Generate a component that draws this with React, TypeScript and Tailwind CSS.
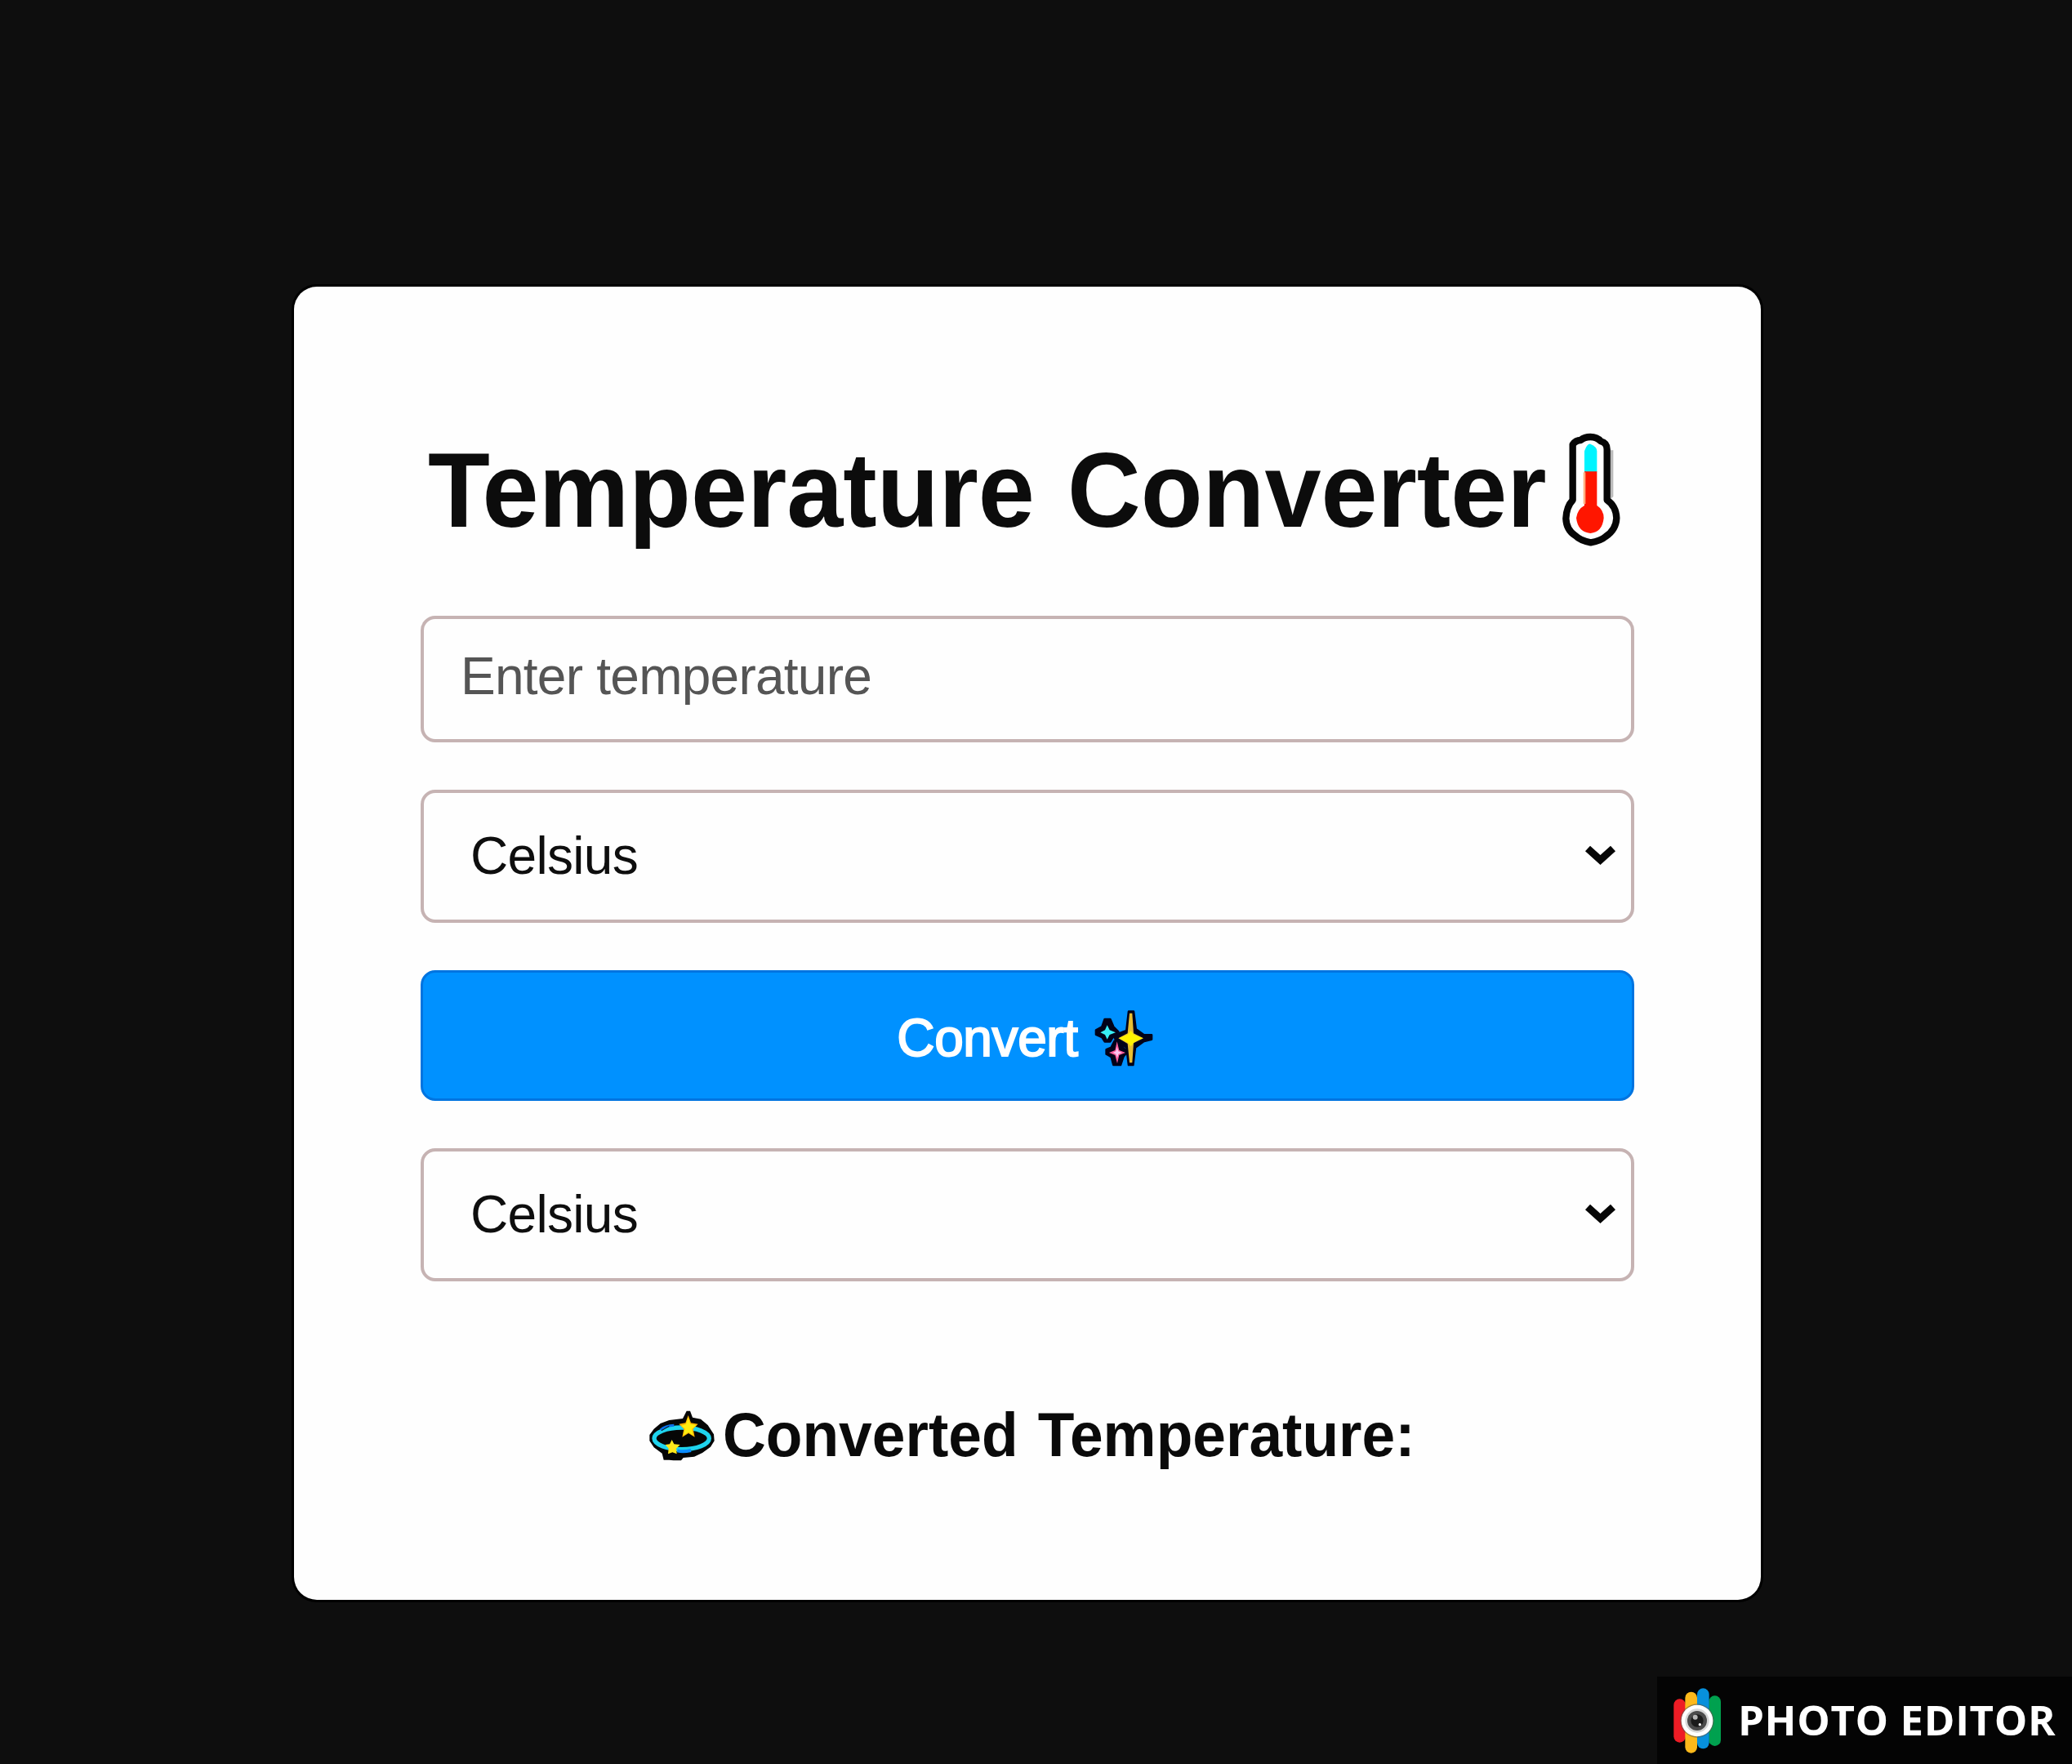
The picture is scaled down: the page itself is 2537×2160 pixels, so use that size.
import type { ReactNode } from "react";

const sans = "font-['Liberation_Sans',Arial,sans-serif]";

function Thermometer() {
  return (
    <svg className="block h-[140px] w-[73px] shrink-0" viewBox="156 91 219 420">
      <path
        d="M262 106 Q286 106 300 122 Q323 128 323 152 V338 Q356 360 358 404 Q356 447 318 472 Q300 488 263 494 Q226 488 206 468 Q174 448 172 406 Q174 362 197 338 V134 Q208 118 226 118 Q240 106 262 106 Z"
        fill="#fff"
        stroke="#060606"
        strokeWidth="25"
        strokeLinejoin="round"
      />
      <path d="M336 155 H346 V325 L336 335 Z" fill="#8d8d8d" opacity="0.6" />
      <path d="M240 235 V158 Q250 130 262 132 Q286 142 286 158 V235 Z" fill="#00f4ff" />
      <path d="M240 233 H286 V358 Q311 374 311 404 Q306 456 262 460 Q216 456 210 404 Q214 372 240 358 Z" fill="#ff1600" />
      <path d="M236 236 H244 V352 H236 Z" fill="#ffb080" />
    </svg>
  );
}

function Sparkles() {
  return (
    <svg className="block h-[72px] w-[72px] shrink-0" viewBox="58 54 216 216">
      <g fill="#02021a" stroke="#02021a" strokeWidth="8" strokeLinejoin="round">
        <path d="M96 90 H116 L128 118 L146 136 L128 152 L116 172 H96 L86 156 L64 146 V130 L86 118 Z" />
        <path d="M132 170 H150 L164 196 L180 208 L164 228 L154 258 H128 L120 228 L102 218 V202 L120 194 Z" />
        <path d="M184 62 H202 L210 126 L240 148 H268 V164 L238 172 L208 194 L200 258 H184 L176 194 L140 172 L128 150 L176 132 Z" />
      </g>
      <path d="M105 112 L114 130 L136 139 L114 147 L105 164 L97 147 L80 139 L97 130 Z" fill="#37eef6" />
      <path d="M141 172 L149 204 L172 213 L149 222 L142 252 L134 222 L112 213 L134 204 Z" fill="#ff5c9c" />
      <path d="M141 192 L146 208 L160 213 L146 218 L142 232 L137 218 L126 213 L137 208 Z" fill="#ffc4f0" />
      <path d="M187 68 H197 L202 142 L238 160 L202 178 L197 250 H187 L180 180 L146 160 L180 142 Z" fill="#e9bf32" />
      <path d="M192 132 L202 146 L236 160 L204 174 L192 190 L180 176 L148 160 L180 146 Z" fill="#fff200" />
    </svg>
  );
}

function Dizzy() {
  return (
    <svg className="block h-[63px] w-[83px] shrink-0" viewBox="44 45 249 189">
      <path
        d="M184 50 H197 L206 74 L236 80 L262 102 L284 136 L286 160 L272 182 L242 204 L212 218 L172 222 L164 232 H136 L120 230 H100 L94 206 L64 184 L48 160 V138 L64 116 L88 96 L120 84 L170 78 Z"
        fill="#060606"
      />
      <ellipse cx="166" cy="151" rx="101" ry="40" fill="none" stroke="#1fd4ee" strokeWidth="16" />
      <path d="M88 120 Q106 104 138 103" fill="none" stroke="#0a6fe8" strokeWidth="9" />
      <path d="M150 196 Q170 202 200 195" fill="none" stroke="#0a8cff" strokeWidth="12" />
      <path d="M92 122 L120 106" stroke="#060606" strokeWidth="3" />
      <path d="M190 66 L200 94 L226 98 L208 116 L214 146 L191 132 L168 146 L174 116 L156 98 L180 94 Z" fill="#ffb300" />
      <path d="M190 74 L198 98 L220 102 L204 116 L208 140 L191 128 L172 140 L178 116 L164 104 L182 98 Z" fill="#ffee10" />
      <path d="M130 156 L138 172 L160 174 L146 188 L148 208 L132 202 L116 208 L118 188 L106 174 L122 172 Z" fill="#ffe81a" />
    </svg>
  );
}

function Select({ className }: { className: string }) {
  return (
    <div className="relative mt-[58px]">
      <select
        defaultValue="Celsius"
        className={`block h-[163px] w-full appearance-none rounded-[18px] border-4 border-[#c6b3b3] bg-[#fefefe] pl-[57px] text-[64px] leading-[80px] tracking-[-0.7px] text-[#0e0e0e] outline-none ${className}`}
      >
        <option>Celsius</option>
        <option>Fahrenheit</option>
        <option>Kelvin</option>
      </select>
      <svg className="pointer-events-none absolute top-[67px] right-[21px] h-[28px] w-[40px]" viewBox="0 0 40 28">
        <path d="M4 5 L19.500 19 L35 5" fill="none" stroke="#060606" strokeWidth="9" />
      </svg>
    </div>
  );
}

function CameraLogo() {
  return (
    <svg className="block h-[80px] w-[58px] shrink-0" viewBox="95 80 174 240">
      <rect x="96" y="120" width="44" height="160" rx="22" fill="#ee1c25" />
      <rect x="225" y="108" width="44" height="185" rx="22" fill="#00a14f" />
      <rect x="182" y="81" width="44" height="222" rx="22" fill="#0790dc" />
      <rect x="138" y="94" width="44" height="225" rx="22" fill="#fdb91b" />
      <circle cx="182" cy="200" r="62" fill="#5d5a50" opacity="0.6" />
      <circle cx="182" cy="200" r="58" fill="#fff" />
      <circle cx="182" cy="200" r="44" fill="#d6d6d6" />
      <circle cx="182" cy="200" r="36" fill="#4b4b4b" />
      <circle cx="182" cy="200" r="23" fill="#1b1b1b" />
      <circle cx="175" cy="187" r="9" fill="#b5b5b5" />
      <circle cx="192" cy="214" r="5" fill="#fff" />
    </svg>
  );
}

function Stretch({ className, children }: { className: string; children: ReactNode }) {
  return <span className={`block origin-left whitespace-nowrap ${className}`}>{children}</span>;
}

export default function App() {
  return (
    <div className={`relative h-[2160px] w-[2537px] overflow-hidden bg-[#0e0e0e] pt-[351px] pl-[360px] ${sans}`}>
      <main className="h-[1608px] w-[1796px] rounded-[28px] bg-[#fefefe] px-[155px] pt-[174px] shadow-[0_0_0_3px_#000]">
        <h1 className="flex h-[150px] pl-[9px] text-[130px] leading-[150px] font-bold text-[#0c0c0c]">
          <Stretch className="w-[1388px] shrink-0 scale-x-[0.955] [word-spacing:6px]">Temperature Converter</Stretch>
          <span className="mt-[5px]">
            <Thermometer />
          </span>
        </h1>

        <input
          placeholder="Enter temperature"
          className="mt-[79px] block h-[155px] w-full rounded-[18px] border-4 border-[#c6b3b3] bg-[#fefefe] pb-[8px] pl-[45px] text-[64px] leading-[80px] tracking-[-0.75px] outline-none placeholder:text-[#555555]"
        />

        <Select className="pb-[1px]" />

        <button className="mt-[58px] flex h-[160px] w-full items-center justify-center gap-[20px] rounded-[18px] border-3 border-[#0074e0] bg-[#0091ff] pt-[8px] pr-[6px] text-[64px] leading-[80px] text-white">
          <span className="-mt-[2px] tracking-[-0.4px] [-webkit-text-stroke:2px_white]">Convert</span>
          <Sparkles />
        </button>

        <Select className="pb-[1px]" />

        <h2 className="mt-[144px] flex h-[88px] pl-[279px] text-[76px] leading-[88px] font-bold text-[#0a0a0a]">
          <span className="mt-[13px] mr-[8px]">
            <Dizzy />
          </span>
          <Stretch className="scale-x-[0.962] [word-spacing:4px]">Converted Temperature:</Stretch>
        </h2>
      </main>

      <div className="absolute right-0 bottom-0 flex h-[107px] w-[508px] bg-[#040404] pt-[14px] pl-[20px]">
        <CameraLogo />
        <span className="-mt-[2px] ml-[21px] block text-[51px] leading-[80px] font-bold tracking-[0.6px] whitespace-nowrap text-white font-['Open_Sans','Noto_Sans',sans-serif]">
          PHOTO EDITOR
        </span>
      </div>
    </div>
  );
}
